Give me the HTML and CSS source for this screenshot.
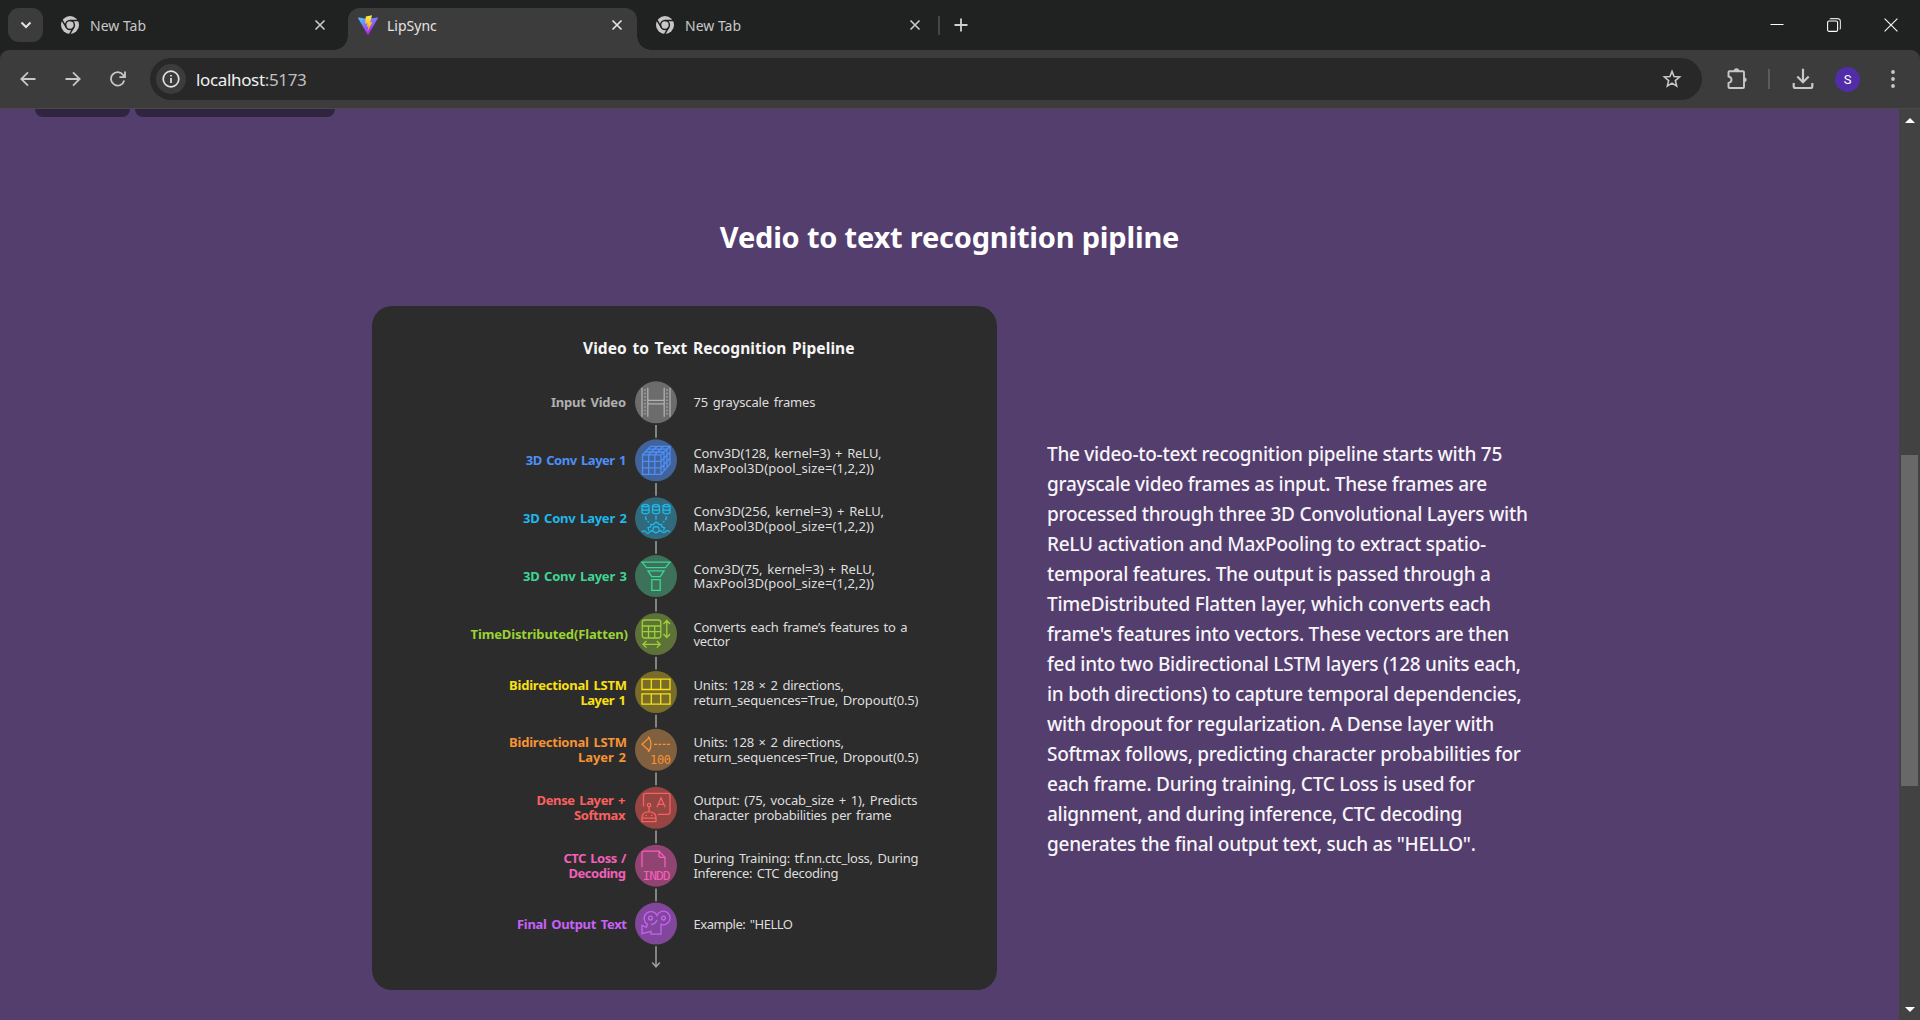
FILE: index.html
```html
<!DOCTYPE html>
<html lang="en">
<head>
<meta charset="utf-8">
<title>LipSync</title>
<link rel="stylesheet" href="styles.css">
</head>
<body>
<svg class="defs" width="0" height="0" aria-hidden="true">
  <symbol id="chrome" viewBox="0 0 18 18">
    <circle cx="9" cy="9" r="9" fill="#c7c7c7"/>
    <circle cx="9" cy="9" r="4.4" fill="none" stroke="#202221" stroke-width="1.5"/>
    <path d="M9 4.6H17.4M5.2 11.2L1 4.1M12.8 11.2L8.7 18.2" stroke="#202221" stroke-width="1.5"/>
  </symbol>
  <symbol id="cross" viewBox="0 0 12 12"><path d="M1.5 1.5l9 9M10.5 1.5l-9 9" stroke="currentColor" stroke-width="1.7" fill="none"/></symbol>
</svg>
<div class="window">
  <header class="tabstrip">
    <button class="tab-search"><svg width="12" height="8" viewBox="0 0 12 8"><path d="M1.5 1.5L6 6l4.500-4.500" fill="none" stroke="#e3e3e3" stroke-width="2"/></svg></button>
    <div class="tab tab-first"><svg class="favicon" width="18" height="18"><use href="#chrome"/></svg><span class="tab-title">New Tab</span><svg class="tab-close" width="12" height="12"><use href="#cross"/></svg></div>
    <div class="tab tab-active">
      <svg class="favicon" width="20" height="20" viewBox="0 0 20 20">
        <defs>
          <linearGradient id="v" x1="0" y1="0" x2=".6" y2="1"><stop offset="0" stop-color="#41d1ff"/><stop offset=".55" stop-color="#8a63ff"/><stop offset="1" stop-color="#bd14fe"/></linearGradient>
          <linearGradient id="bolt" x1="0" y1="0" x2="0" y2="1"><stop offset="0" stop-color="#ffea57"/><stop offset=".3" stop-color="#ffd92a"/><stop offset="1" stop-color="#ff9800"/></linearGradient>
        </defs>
        <path d="M.7 2.400L10 4l9.300-1.600a.6.6 0 0 1 .6.9L10.500 19.500a.6.6 0 0 1-1 0L.1 3.300a.6.6 0 0 1 .6-.9z" fill="url(#v)"/>
        <path d="M14.200.2L7.800 1.400l-.6 7.300 2.300-.5-.7 3.600 1.600-.5-1 5.400 5-9.500-2.400.4 2-7.100z" fill="url(#bolt)"/>
      </svg>
      <span class="tab-title">LipSync</span><svg class="tab-close" width="12" height="12"><use href="#cross"/></svg>
    </div>
    <div class="tab tab-last"><svg class="favicon" width="18" height="18"><use href="#chrome"/></svg><span class="tab-title">New Tab</span><svg class="tab-close" width="12" height="12"><use href="#cross"/></svg></div>
    <span class="strip-divider"></span>
    <svg class="new-tab" width="14" height="14" viewBox="0 0 14 14"><path d="M7 .5v13M.5 7h13" stroke="#d0d0d0" stroke-width="1.800"/></svg>
    <div class="window-controls">
      <svg width="14" height="14" viewBox="0 0 14 14"><path d="M.5 6.500h13" stroke="#fff" stroke-width="1"/></svg>
      <svg width="14" height="14" viewBox="0 0 14 14"><rect x=".6" y="3" width="10" height="10.400" rx="1.500" fill="none" stroke="#fff" stroke-width="1.100"/><path d="M3 1.200Q3 .6 4 .6h6.500q2.900 0 2.900 3v6.500q0 1-.8 1.200" fill="none" stroke="#ddd" stroke-width="1.100"/></svg>
      <svg width="14" height="14" viewBox="0 0 14 14"><path d="M.6.6l12.800 12.800M13.400.6L.6 13.400" stroke="#f0f0f0" stroke-width="1.200"/></svg>
    </div>
  </header>

  <div class="toolbar">
    <div class="nav-buttons">
      <svg width="16" height="16" viewBox="0 0 16 16"><path d="M15.500 8H1.500M8 1.300L1.300 8 8 14.700"/></svg>
      <svg width="16" height="16" viewBox="0 0 16 16"><path d="M.5 8h14M8 1.300L14.700 8 8 14.700"/></svg>
      <svg width="16" height="16" viewBox="0 0 16 16"><path d="M14.200 9.500A6.700 6.700 0 1 1 13.200 4l1.500 2M15 .6V6.200H9.400"/></svg>
    </div>
    <div class="omnibox">
      <span class="site-info"><svg width="18" height="18" viewBox="0 0 18 18"><circle cx="9" cy="9" r="7.800" fill="none" stroke="#e3e3e3" stroke-width="1.700"/><path d="M9 8v5M9 4.900v1.700" stroke="#e3e3e3" stroke-width="1.700"/></svg></span>
      <span class="url">localhost<span class="port">:5173</span></span>
      <svg class="star" width="20" height="20" viewBox="0 0 20 20"><path d="M10 2.400l2.050 5.200 5.550.4-4.250 3.600 1.350 5.500L10 14.100l-4.700 3 1.350-5.500L2.400 8l5.550-.4z" fill="none" stroke="#c7c7c7" stroke-width="1.600"/></svg>
    </div>
    <svg class="extensions" width="22" height="22" viewBox="0 0 22 22"><path d="M2.500 4.200q0-1 1-1H17q1 0 1 1V19q0 1-1 1H3.500q-1 0-1-1v-4q3-.6 3-3.200T2.500 8.500z" fill="none" stroke="#c7c7c7" stroke-width="1.900"/><path d="M7.800 3a2.700 2.700 0 0 1 5.400 0zM18.200 9.200a2.500 2.500 0 0 1 0 5z" fill="#c7c7c7"/></svg>
    <span class="toolbar-divider"></span>
    <svg class="download" width="22" height="22" viewBox="0 0 22 22"><path d="M11 .8v13M5.300 8.500L11 14.200l5.700-5.700M1.700 15v3.200q0 1.800 1.800 1.800h15q1.800 0 1.800-1.800V15" fill="none" stroke="#c7c7c7" stroke-width="2.200"/></svg>
    <span class="avatar">S</span>
    <svg class="menu" width="4" height="18" viewBox="0 0 4 18"><g fill="#c7c7c7"><circle cx="2" cy="2" r="1.900"/><circle cx="2" cy="9" r="1.900"/><circle cx="2" cy="16" r="1.900"/></g></svg>
  </div>

  <div class="viewport">
    <main class="page">
      <div class="previous-row"><span class="chip chip-small"></span><span class="chip chip-large"></span></div>
      <h1 class="heading"><span>Vedio to text recognition pipline</span></h1>
      <section class="content">
        <svg class="pipeline" width="625" height="684" viewBox="0 0 625 684" role="img">
          <text class="pl-title" x="211" y="47.500" textLength="271.500">Video to Text Recognition Pipeline</text>

          <g class="stage gray" transform="translate(284 96.300)">
            <circle r="21"/><path class="link" d="M0 22.700V35.500"/>
            <g class="icon"><path d="M-14-14.500V14.500M14-14.500V14.500M-8.200-14.500V14.500M8.200-14.500V14.500M-8.200-2H8.200M-8.200 1.600H8.200"/><path d="M-11-13V14M11-13V14" stroke-dasharray="1.500 1.900"/></g>
            <text class="label" x="-30" y="5" textLength="75">Input Video</text>
            <text class="desc" x="37.500" y="5" textLength="122">75 grayscale frames</text>
          </g>
          <g class="stage blue" transform="translate(284 154.300)">
            <circle r="21"/><path class="link" d="M0 22.700V35.500"/>
            <g class="icon"><path d="M-13.500-5.500H5V14H-13.500zM-7.300-5.500V14M-1.200-5.500V14M-13.500 1H5M-13.500 7.500H5M-13.500-5.500L-5.500-14H14L5-5.500M14-14V3.500L5 14M-7.300-5.500L1-14M-1.200-5.500L7.500-14M-10.800-8.300H8M-8.200-11.200H11M8-8.300V10.500M11-11.200V7M5 1L14-8M5 7.500L14-2.200"/></g>
            <text class="label" x="-29.500" y="5" textLength="100.700">3D Conv Layer 1</text>
            <text class="desc" x="37.500" y="-2.400" textLength="188">Conv3D(128, kernel=3) + ReLU,</text>
            <text class="desc" x="37.500" y="12.500" textLength="180.500">MaxPool3D(pool_size=(1,2,2))</text>
          </g>
          <g class="stage cyan" transform="translate(284 212.200)">
            <circle r="21"/><path class="link" d="M0 22.700V35.500"/>
            <g class="icon">
              <path d="M-14-12.500v7q3.500 2.500 7 0v-7q-3.500-2.500-7 0q3.500 2.500 7 0M-14-9q3.500 2.500 7 0M-3.500-12.500v7q3.500 2.500 7 0v-7q-3.500-2.500-7 0q3.500 2.500 7 0M-3.500-9q3.500 2.500 7 0M7-12.500v7q3.500 2.500 7 0v-7q-3.500-2.500-7 0q3.500 2.500 7 0M7-9q3.500 2.500 7 0"/>
              <path d="M-10.500-2q0 4 3.500 6M0-2.500V4M10.500-2q0 4-3.500 6" stroke-dasharray="4 1.500"/>
              <path d="M-14 14q2-2.500 4 0t4-.5q2-2 4 0t4 0q2-2 4 0t4-.5q2-1.500 4 1M-7 12.500l-1-3 2.500-.8.500-2.400h2.600L-1 4.500h2.500l1.400 1.800h2.600l.5 2.400 2.500.8-1 3M-3 12q-.5-3.500 3-3.700 3.500.2 3 3.700"/>
            </g>
            <text class="label" x="-29" y="5" textLength="104">3D Conv Layer 2</text>
            <text class="desc" x="37.500" y="-2.400" textLength="190.500">Conv3D(256, kernel=3) + ReLU,</text>
            <text class="desc" x="37.500" y="12.500" textLength="180.500">MaxPool3D(pool_size=(1,2,2))</text>
          </g>
          <g class="stage green" transform="translate(284 270.100)">
            <circle r="21"/><path class="link" d="M0 22.700V35.500"/>
            <g class="icon"><path d="M-14-14H14L9.500-8.500H-9.500zM-8-5.300H8L4.200.5H-4.200zM-4.200 3.500H4.200V14.300H-4.200z"/></g>
            <text class="label" x="-29" y="5" textLength="104">3D Conv Layer 3</text>
            <text class="desc" x="37.500" y="-2.400" textLength="181.500">Conv3D(75, kernel=3) + ReLU,</text>
            <text class="desc" x="37.500" y="12" textLength="180.500">MaxPool3D(pool_size=(1,2,2))</text>
          </g>
          <g class="stage lime" transform="translate(284 328)">
            <circle r="21"/><path class="link" d="M0 22.700V35.500"/>
            <g class="icon"><rect x="-13.700" y="-14" width="18.500" height="18" rx="2.500"/><path d="M-13.700-8H4.800M-13.700-2.300H4.800M-7.500-8V4M-1.300-8V4M10.800-13V3M7.500-10L10.800-13.500 14-10M7.500 0L10.800 3.500 14 0M-12.500 10.300H3.500M-9.500 7L-13 10.300-9.500 13.600M.8 7L4.200 10.300.8 13.600"/></g>
            <text class="label" x="-28" y="5" textLength="157.500">TimeDistributed(Flatten)</text>
            <text class="desc" x="37.500" y="-2.400" textLength="214">Converts each frame’s features to a</text>
            <text class="desc" x="37.500" y="12" textLength="36.500">vector</text>
          </g>
          <g class="stage yellow" transform="translate(284 386)">
            <circle r="21"/><path class="link" d="M0 22.700V35.500"/>
            <g class="icon"><path d="M-14-12.800H14V-2.500H-14zM-4.700-12.800V-2.500M4.700-12.800V-2.500M-14 1.800H14V12.200H-14zM-4.700 1.800V12.200M4.700 1.800V12.200"/></g>
            <text class="label" x="-29" y="-2.400" textLength="118">Bidirectional LSTM</text>
            <text class="label" x="-30" y="12.500" textLength="45.500">Layer 1</text>
            <text class="desc" x="37.500" y="-2.400" textLength="150.500">Units: 128 × 2 directions,</text>
            <text class="desc" x="37.500" y="12.500" textLength="225">return_sequences=True, Dropout(0.5)</text>
          </g>
          <g class="stage orange" transform="translate(284 443.800)">
            <circle r="21"/><path class="link" d="M0 22.700V35.500"/>
            <g class="icon"><path d="M-14-5.500L-6.800-12Q-3.200-5.500-6.800 1zM-8-13l2 2M-8 2l2-2"/><path d="M-2-5.500H14" stroke-dasharray="3 1.300"/></g>
            <text class="icon-text" x="-6" y="13.800" textLength="21">100</text>
            <text class="label" x="-29" y="-2.400" textLength="118">Bidirectional LSTM</text>
            <text class="label" x="-30" y="12.500" textLength="48">Layer 2</text>
            <text class="desc" x="37.500" y="-2.400" textLength="150.500">Units: 128 × 2 directions,</text>
            <text class="desc" x="37.500" y="12.500" textLength="225">return_sequences=True, Dropout(0.5)</text>
          </g>
          <g class="stage red" transform="translate(284 501.800)">
            <circle r="21"/><path class="link" d="M0 22.700V35.500"/>
            <g class="icon"><path d="M-12.500-1.500V-12.500q0-2 2-2H12q2 0 2 2V4.500q0 2-2 2H2M1-.500L5-10 9.200-.500M2.300-3.500H7.900M-7-1V4M-14 13.800V10q0-6 7-6t7 6v3.800zM-14 10.300H0"/><circle class="stroke" cx="-7" cy="-2.700" r="1.700"/><path d="M-10.500 7.600h1.500M-5 7.600h1.500"/></g>
            <text class="label" x="-30.500" y="-2.400" textLength="89">Dense Layer +</text>
            <text class="label" x="-30.500" y="12" textLength="51.500">Softmax</text>
            <text class="desc" x="37.500" y="-2.400" textLength="224">Output: (75, vocab_size + 1), Predicts</text>
            <text class="desc" x="37.500" y="12" textLength="198">character probabilities per frame</text>
          </g>
          <g class="stage pink" transform="translate(284 559.700)">
            <circle r="21"/><path class="link" d="M0 22.700V35.500"/>
            <g class="icon"><path d="M-14 1.500V-12.500q0-2 2-2H3L9-8.300V1.500M3-14.500v4.200q0 2 2 2H9"/></g>
            <text class="icon-text indd" x="-13.500" y="14" textLength="28">INDD</text>
            <text class="label" x="-29.500" y="-2.400" textLength="63">CTC Loss /</text>
            <text class="label" x="-30" y="12" textLength="57.500">Decoding</text>
            <text class="desc" x="37.500" y="-2.400" textLength="225">During Training: tf.nn.ctc_loss, During</text>
            <text class="desc" x="37.500" y="12" textLength="145">Inference: CTC decoding</text>
          </g>
          <g class="stage purple" transform="translate(284 617.600)">
            <circle r="21"/><path class="link" d="M0 22.700V43M-3.800 39L0 43.200 3.800 39"/>
            <g class="icon"><circle class="stroke" cx="-5.500" cy="-5.500" r="1.900"/><circle class="stroke" cx="7.500" cy="-5.500" r="1.900"/><path d="M-8.500.7A6.800 6.800 0 1 1 1-8.200 6.800 6.800 0 1 1 5 .8V10.500H-5V7.700L-14 10V1.800L-9.500 3.500zM-5 .8q4 .3 6-4.500"/></g>
            <text class="label" x="-29" y="5" textLength="110">Final Output Text</text>
            <text class="desc" x="37.500" y="5" textLength="99.500">Example: "HELLO</text>
          </g>
        </svg>
        <p class="summary">The video-to-text recognition pipeline starts with 75<br>grayscale video frames as input. These frames are<br>processed through three 3D Convolutional Layers with<br>ReLU activation and MaxPooling to extract spatio-<br>temporal features. The output is passed through a<br>TimeDistributed Flatten layer, which converts each<br>frame's features into vectors. These vectors are then<br>fed into two Bidirectional LSTM layers (128 units each,<br>in both directions) to capture temporal dependencies,<br>with dropout for regularization. A Dense layer with<br>Softmax follows, predicting character probabilities for<br>each frame. During training, CTC Loss is used for<br>alignment, and during inference, CTC decoding<br>generates the final output text, such as "HELLO".</p>
      </section>
    </main>
    <aside class="scrollbar">
      <svg width="10" height="5" viewBox="0 0 10 5"><path d="M5 0l5 5H0z" fill="#fff"/></svg>
      <span class="thumb"></span>
      <svg class="down" width="10" height="5" viewBox="0 0 10 5"><path d="M5 5l5-5H0z" fill="#fff"/></svg>
    </aside>
  </div>
</div>
</body>
</html>
```
FILE: styles.css
```css
* { box-sizing: border-box; }
body { margin: 0; overflow: hidden; font-family: "Noto Sans", "Open Sans", sans-serif; }
svg { display: block; flex: none; }
.defs { position: absolute; }
.window { width: 1920px; height: 1020px; display: flex; flex-direction: column; background: #202221; }

/* Tab strip */
.tabstrip { height: 50px; display: flex; align-items: center; padding-left: 8px; }
.tab-search { width: 35px; height: 34px; padding: 0; border: 0; border-radius: 11px; background: #3c3c3c; display: flex; align-items: center; justify-content: center; }
.tab { height: 42px; display: flex; align-items: center; align-self: flex-end; padding-bottom: 8px; color: #c7c7c7; font-size: 14px; }
.tab-title { flex: 1; line-height: 20px; padding-top: 1px; }
.favicon { margin-right: 11px; }
.tab-first { width: 305px; padding-left: 18px; padding-right: 22px; }
.tab-active { position: relative; width: 289px; padding-left: 10px; padding-right: 14px; background: #3c3c3c; border-radius: 12px 12px 0 0; color: #e3e3e3; }
.tab-active .favicon { margin-right: 9px; }
.tab-active::before, .tab-active::after { content: ""; position: absolute; bottom: 0; width: 14px; height: 14px; }
.tab-active::before { left: -14px; background: radial-gradient(circle at 0 0, transparent 13.5px, #3c3c3c 14px); }
.tab-active::after { right: -14px; background: radial-gradient(circle at 100% 0, transparent 13.5px, #3c3c3c 14px); }
.tab-last { width: 301px; padding-left: 19px; padding-right: 17px; }
.strip-divider { width: 2px; height: 19px; background: #444746; }
.new-tab { margin-left: 14px; }
.window-controls { display: flex; gap: 43px; margin-left: auto; padding-right: 22px; }

/* Toolbar */
.toolbar { height: 59px; display: flex; align-items: center; background: #3c3c3c; border-bottom: 1px solid #4a4a4a; border-radius: 9px 9px 0 0; padding-left: 20px; }
.nav-buttons { display: flex; gap: 29px; width: 130px; }
.nav-buttons path { fill: none; stroke: #c7c7c7; stroke-width: 1.8; }
.omnibox { width: 1552px; height: 42px; border-radius: 21px; background: #282828; display: flex; align-items: center; padding: 0 20px 0 6px; }
.site-info { width: 30px; height: 30px; border-radius: 50%; background: #3c3c3c; display: flex; align-items: center; justify-content: center; }
.url { flex: 1; margin-left: 10px; padding-top: 1px; font-size: 17px; line-height: 24px; letter-spacing: -0.35px; color: #f0f0f0; }
.port { color: #c0c0c0; }
.extensions { margin-left: 24px; }
.toolbar-divider { width: 2px; height: 20px; margin-left: 20px; background: #5c5c5c; }
.download { margin-left: 22px; }
.avatar { width: 25px; height: 25px; margin-left: 21px; border-radius: 50%; background: #512da8; color: #fff; font: 13px/25px Roboto, sans-serif; text-align: center; }
.menu { margin-left: 31px; }

/* Page */
.viewport { flex: 1; display: flex; min-height: 0; }
.page { flex: 1; background: #543e6e; color: #fff; overflow: hidden; }
.previous-row { display: flex; gap: 5px; padding-left: 35px; height: 8px; }
.chip { height: 8px; border-radius: 0 0 9px 9px; background: #30253f; }
.chip-small { width: 95px; }
.chip-large { width: 200px; }
.heading { margin: 99px 0 0; height: 90px; line-height: 42px; font-size: 29px; font-weight: 700; text-align: center; letter-spacing: -0.2px; }
.content { display: flex; align-items: center; gap: 50px; padding-left: 372px; }
.summary { margin: 0; padding-top: 2px; font-size: 19px; font-weight: 500; line-height: 30px; white-space: nowrap; letter-spacing: -0.27px; color: #f8f5fa; }

/* Pipeline diagram */
.pipeline { background: #2c2c2c; border-radius: 20px; }
.pipeline text { word-spacing: 1.5px; }
.pl-title { font-size: 15.500px; font-weight: 700; fill: #f5f5f5; }
.label { font-size: 13px; font-weight: 700; text-anchor: end; fill: var(--ink); }
.desc { font-size: 13px; fill: #dedede; }
.stage circle { fill: var(--disc); }
.icon path, .icon rect, .icon .stroke { fill: none; stroke: var(--ink); stroke-width: 1.300; }
.link { fill: none; stroke: #a0a0a0; stroke-width: 1.500; }
.icon-text { font: 12px "DejaVu Sans Mono", monospace; fill: var(--ink); }
.icon-text.indd { font-size: 13px; }
.gray { --ink: #b0b0b0; --disc: #6c6c6c; }
.blue { --ink: #4e8ff7; --disc: #42629a; }
.cyan { --ink: #1eb9ea; --disc: #31697d; }
.green { --ink: #3ed694; --disc: #3d7159; }
.lime { --ink: #9ad333; --disc: #5e7139; }
.yellow { --ink: #fae013; --disc: #786c2b; }
.orange { --ink: #f79333; --disc: #80603e; }
.red { --ink: #fb6060; --disc: #954643; }
.pink { --ink: #f35fb9; --disc: #904472; }
.purple { --ink: #c861f9; --disc: #81479b; }

/* Scrollbar */
.scrollbar { width: 21px; background: #424242; display: flex; flex-direction: column; align-items: center; padding: 9px 0 8px; }
.thumb { width: 17px; height: 331px; margin-top: 332px; background: #686868; }
.down { margin-top: auto; }
```
